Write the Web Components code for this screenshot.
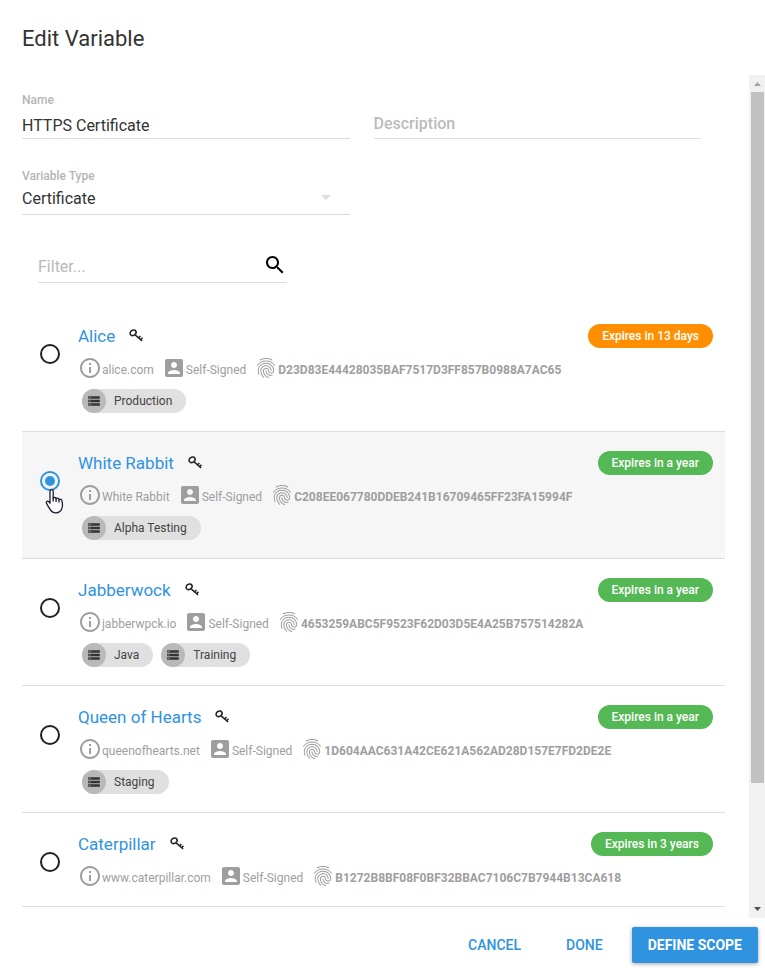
<!DOCTYPE html>
<html lang="en">
<head>
<meta charset="utf-8">
<title>Edit Variable</title>
<style>
  body { margin: 0; font-family: Roboto, "Liberation Sans", sans-serif; background: #fff; color: #333; }
</style>
</head>
<body>
<variable-dialog>
  <text-field slot="fields" label="Name" value="HTTPS Certificate"></text-field>
  <text-field slot="fields" placeholder="Description"></text-field>
  <select-field slot="fields" label="Variable Type" value="Certificate"></select-field>
  <filter-field slot="filter"></filter-field>
  <certificate-row name="Alice" subject="alice.com" thumbprint="D23D83E44428035BAF7517D3FF857B0988A7AC65" expires="Expires in 13 days" soon tags="Production"></certificate-row>
  <certificate-row selected name="White Rabbit" subject="White Rabbit" thumbprint="C208EE067780DDEB241B16709465FF23FA15994F" expires="Expires in a year" tags="Alpha Testing"></certificate-row>
  <certificate-row name="Jabberwock" subject="jabberwpck.io" thumbprint="4653259ABC5F9523F62D03D5E4A25B757514282A" expires="Expires in a year" tags="Java,Training"></certificate-row>
  <certificate-row name="Queen of Hearts" subject="queenofhearts.net" thumbprint="1D604AAC631A42CE621A562AD28D157E7FD2DE2E" expires="Expires in a year" tags="Staging"></certificate-row>
  <certificate-row name="Caterpillar" subject="www.caterpillar.com" thumbprint="B1272B8BF08F0BF32BBAC7106C7B7944B13CA618" expires="Expires in 3 years" tags=""></certificate-row>
  <action-button slot="actions">CANCEL</action-button>
  <action-button slot="actions">DONE</action-button>
  <action-button slot="actions" primary>DEFINE SCOPE</action-button>
</variable-dialog>

<script>
const ICONS = {
  info: '<path d="M11 7h2v2h-2zm0 4h2v6h-2zm1-9C6.48 2 2 6.48 2 12s4.48 10 10 10 10-4.48 10-10S17.52 2 12 2zm0 18c-4.41 0-8-3.59-8-8s3.59-8 8-8 8 3.59 8 8-3.59 8-8 8z"/>',
  account: '<path d="M3 5v14c0 1.1.89 2 2 2h14c1.1 0 2-.9 2-2V5c0-1.100-.9-2-2-2H5c-1.110 0-2 .9-2 2zm12 4c0 1.660-1.340 3-3 3s-3-1.340-3-3 1.340-3 3-3 3 1.340 3 3zm-9 8c0-2 4-3.100 6-3.100s6 1.100 6 3.100v1H6v-1z"/>',
  fingerprint: '<path d="M17.81 4.47c-.08 0-.16-.02-.23-.06C15.66 3.42 14 3 12.01 3c-1.98 0-3.86.47-5.57 1.41-.24.13-.54.04-.68-.2-.13-.24-.04-.55.2-.68C7.82 2.52 9.86 2 12.01 2c2.13 0 3.99.47 6.03 1.52.25.13.34.43.21.67-.09.18-.26.28-.44.28zM3.5 9.72c-.1 0-.2-.03-.29-.09-.23-.16-.28-.47-.12-.7.99-1.4 2.25-2.5 3.75-3.27C9.98 4.04 14 4.03 17.15 5.65c1.5.77 2.76 1.86 3.75 3.25.16.22.11.54-.12.7-.23.16-.54.11-.7-.12-.9-1.26-2.04-2.25-3.39-2.94-2.87-1.47-6.54-1.47-9.4.01-1.36.7-2.5 1.7-3.4 2.96-.08.14-.23.21-.39.21zm6.25 12.07c-.13 0-.26-.05-.35-.15-.87-.87-1.34-1.43-2.01-2.64-.69-1.23-1.05-2.73-1.05-4.34 0-2.97 2.54-5.39 5.66-5.39s5.66 2.42 5.66 5.39c0 .28-.22.5-.5.5s-.5-.22-.5-.5c0-2.42-2.09-4.39-4.66-4.39-2.57 0-4.66 1.97-4.66 4.39 0 1.44.32 2.77.93 3.85.64 1.15 1.08 1.64 1.85 2.42.19.2.19.51 0 .71-.11.1-.24.15-.37.15zm7.17-1.85c-1.19 0-2.24-.3-3.1-.89-1.49-1.01-2.38-2.65-2.38-4.39 0-.28.22-.5.5-.5s.5.22.5.5c0 1.41.72 2.74 1.94 3.56.71.48 1.54.71 2.54.71.24 0 .64-.03 1.04-.1.27-.05.53.13.58.41.05.27-.13.53-.41.58-.57.11-1.07.12-1.21.12zM14.91 22c-.04 0-.09-.01-.13-.02-1.59-.44-2.63-1.03-3.72-2.1-1.4-1.39-2.17-3.24-2.17-5.22 0-1.62 1.38-2.94 3.08-2.94 1.7 0 3.08 1.32 3.08 2.94 0 1.07.93 1.94 2.08 1.94s2.08-.87 2.08-1.94c0-3.77-3.25-6.83-7.25-6.83-2.84 0-5.44 1.58-6.61 4.03-.39.81-.59 1.76-.59 2.8 0 .78.07 2.01.67 3.61.1.26-.03.55-.29.64-.26.1-.55-.04-.64-.29-.49-1.31-.73-2.61-.73-3.96 0-1.2.23-2.29.68-3.24 1.33-2.79 4.28-4.6 7.51-4.6 4.55 0 8.25 3.51 8.25 7.83 0 1.62-1.38 2.94-3.08 2.94s-3.08-1.32-3.08-2.94c0-1.07-.93-1.94-2.08-1.94s-2.08.87-2.08 1.94c0 1.71.66 3.31 1.87 4.51.95.94 1.86 1.46 3.27 1.85.27.07.42.35.35.61-.05.23-.26.38-.47.38z"/>',
  storage: '<path d="M2 20h20v-4H2v4zm2-3h2v2H4v-2zM2 4v4h20V4H2zm4 3H4V5h2v2zm-4 7h20v-4H2v4zm2-3h2v2H4v-2z"/>',
  search: '<path d="M15.500 14h-.79l-.28-.27C15.410 12.590 16 11.110 16 9.500 16 5.910 13.090 3 9.500 3S3 5.910 3 9.500 5.910 16 9.500 16c1.610 0 3.090-.59 4.230-1.570l.27.28v.79l5 4.990L20.490 19l-4.990-5zm-6 0C7.010 14 5 11.990 5 9.500S7.010 5 9.500 5 14 7.010 14 9.500 11.990 14 9.500 14z"/>',
  key: '<g fill="none" stroke="currentColor" stroke-width="2.600"><ellipse cx="7" cy="6.500" rx="5.500" ry="4.400" transform="rotate(-35 7 6.500)"/><path d="M10.500 10l12 10.500M16.500 15.500l3-3.500M20 18.500l3-3.500"/></g>',
  chevron: '<path d="M7 10l5 5 5-5z"/>'
};

class AppIcon extends HTMLElement {
  connectedCallback() {
    const root = this.attachShadow({ mode: 'open' });
    root.innerHTML = `<style>:host{display:block;flex:none;width:24px;height:24px}svg{display:block;width:100%;height:100%;fill:currentColor}</style>
      <svg viewBox="0 0 24 24" aria-hidden="true">${ICONS[this.getAttribute('name')]}</svg>`;
  }
}
customElements.define('app-icon', AppIcon);

class TextField extends HTMLElement {
  connectedCallback() {
    const label = this.getAttribute('label');
    const hint = this.getAttribute('placeholder') || '';
    this.attachShadow({ mode: 'open' }).innerHTML = `<style>
      :host{display:flex;flex-direction:column;justify-content:flex-end;height:46px;border-bottom:1px solid #ddd}
      label{font-size:12px;font-weight:500;line-height:16px;color:#b5b5b5}
      input{font:inherit;font-size:16px;line-height:20px;height:30px;box-sizing:border-box;padding:6px 0 2px;margin:0;border:0;outline:0;width:100%;color:#333;background:none}
      input::placeholder{color:#bbb;opacity:1}
      .bare{padding:2px 0;font-weight:500}
      </style>${label ? `<label for="f">${label}</label>` : ''}
      <input id="f" class="${label ? '' : 'bare'}" type="text" value="${this.getAttribute('value') || ''}" placeholder="${hint}" aria-label="${label || hint}">`;
  }
}
customElements.define('text-field', TextField);

class SelectField extends HTMLElement {
  connectedCallback() {
    this.attachShadow({ mode: 'open' }).innerHTML = `<style>
      :host{display:flex;flex-direction:column;justify-content:flex-end;height:46px;border-bottom:1px solid #ddd}
      label{font-size:12px;font-weight:500;line-height:16px;color:#b5b5b5}
      .box{display:grid;grid-template-columns:1fr 24px 12px;align-items:center;height:30px}
      select{grid-area:1/1/2/4;appearance:none;font:inherit;font-size:16px;line-height:20px;padding:0;margin:0;border:0;outline:0;color:#333;background:none}
      app-icon{grid-area:1/2/2/3;color:#ddd;pointer-events:none;margin-bottom:4px}
      </style><label for="s">${this.getAttribute('label')}</label>
      <div class="box"><select id="s"><option>${this.getAttribute('value')}</option></select><app-icon name="chevron"></app-icon></div>`;
  }
}
customElements.define('select-field', SelectField);

class FilterField extends HTMLElement {
  connectedCallback() {
    this.attachShadow({ mode: 'open' }).innerHTML = `<style>
      :host{display:flex;align-items:center;width:249px;height:34px;border-bottom:1px solid #ddd}
      input{flex:1;min-width:0;font:inherit;font-size:16px;line-height:20px;padding:4px 0 0;border:0;outline:0;background:none}
      input::placeholder{color:#b8b8b8;opacity:1}
      button{border:0;padding:0;background:none;color:#000}
      </style><input type="text" placeholder="Filter..." aria-label="Filter"><button type="button" aria-label="Search"><app-icon name="search"></app-icon></button>`;
  }
}
customElements.define('filter-field', FilterField);

class TagChip extends HTMLElement {
  connectedCallback() {
    this.attachShadow({ mode: 'open' }).innerHTML = `<style>
      :host{display:flex;align-items:center;height:24px;border-radius:12px;background:#e0e0e0;font-size:12px;color:#444;padding-right:14px;gap:8px}
      i{display:grid;place-items:center;width:24px;height:24px;border-radius:50%;background:#b9b9b9;color:#333}
      app-icon{width:14px;height:14px}
      </style><i><app-icon name="storage"></app-icon></i><slot></slot>`;
  }
}
customElements.define('tag-chip', TagChip);

class ExpiryBadge extends HTMLElement {
  connectedCallback() {
    this.attachShadow({ mode: 'open' }).innerHTML = `<style>
      :host{display:block;height:24px;border-radius:12px;background:#54b854;color:#fff;font-size:12px;font-weight:500;line-height:24px;padding:0 14px;white-space:nowrap}
      :host([soon]){background:#ff8f00}
      </style><slot></slot>`;
  }
}
customElements.define('expiry-badge', ExpiryBadge);

class PointerHand extends HTMLElement {
  connectedCallback() {
    this.attachShadow({ mode: 'open' }).innerHTML = `<style>:host{display:block;pointer-events:none}svg{display:block}</style>
      <svg width="20" height="26" viewBox="0 0 20 26" aria-hidden="true"><path d="M5 2.500c0-2.400 3.200-2.400 3.200 0v6.700c.6-1.200 2.700-.9 2.900.6.700-1.100 2.700-.7 2.900.9.800-.9 2.900-.4 3 1.200.6 2.800.9 5.600-.4 8.100-.9 2.300-3 3.700-5.500 3.800-2.300.1-4.300-.8-5.500-2.700-1-1.700-2.200-3.500-3.300-5.300-1.100-1.800-1.400-3.100-.2-3.500 1.100-.4 2 .5 2.900 1.900z" fill="#fff" stroke="#1c1b2e" stroke-width="1.300" stroke-linejoin="round"/><path d="M8.200 8.500v4M11.100 9.500v3.500M14 10.500v3" fill="none" stroke="#1c1b2e" stroke-width="1.300"/></svg>`;
  }
}
customElements.define('pointer-hand', PointerHand);

class CertificateRow extends HTMLElement {
  connectedCallback() {
    const a = n => this.getAttribute(n);
    const on = this.hasAttribute('selected');
    const tags = a('tags') ? a('tags').split(',') : [];
    this.attachShadow({ mode: 'open' }).innerHTML = `<style>
      :host{display:grid;grid-template-columns:20px minmax(0,1fr);column-gap:18px;padding:19px 12px 18px 18px;border-bottom:1px solid #ddd}
      :host([selected]){background:#f6f6f6}
      .pick{position:relative;padding-top:20px}
      input{appearance:none;display:grid;place-items:center;width:20px;height:20px;margin:0;border:2px solid #212121;border-radius:50%;outline:0}
      input:checked{border-color:#2f93e0}
      input:checked::before{content:"";width:10px;height:10px;border-radius:50%;background:#2f93e0}
      pointer-hand{position:absolute;left:5px;top:38px}
      .head{display:flex;align-items:center;height:24px}
      a{font-size:17px;line-height:24px;color:#2f93e0;text-decoration:none}
      .key{width:14px;height:14px;margin-left:14px;color:#222}
      expiry-badge{margin-left:auto}
      .meta{display:flex;align-items:center;height:24px;margin-top:8px;color:#9e9e9e;font-size:12px;white-space:nowrap}
      .meta span{margin-right:8px;padding-top:3px}
      .meta b{padding-top:3px;font-weight:700}
      .tags{display:flex;gap:8px;margin:9px 0 0 4px}
      </style>
      <div class="pick"><input id="r" type="radio" name="certificate" aria-label="${a('name')}" ${on ? 'checked' : ''}>${on ? '<pointer-hand></pointer-hand>' : ''}</div>
      <div>
        <div class="head"><a href="#">${a('name')}</a><app-icon class="key" name="key"></app-icon><expiry-badge ${this.hasAttribute('soon') ? 'soon' : ''}>${a('expires')}</expiry-badge></div>
        <div class="meta"><app-icon name="info"></app-icon><span>${a('subject')}</span><app-icon name="account"></app-icon><span>Self-Signed</span><app-icon name="fingerprint"></app-icon><b>${a('thumbprint')}</b></div>
        ${tags.length ? `<div class="tags">${tags.map(t => `<tag-chip>${t}</tag-chip>`).join('')}</div>` : ''}
      </div>`;
  }
}
customElements.define('certificate-row', CertificateRow);

class ActionButton extends HTMLElement {
  connectedCallback() {
    this.attachShadow({ mode: 'open' }).innerHTML = `<style>
      :host{display:block}
      button{display:block;height:36px;padding:0 16px;border:0;border-radius:2px;background:none;color:#2f93e0;font:inherit;font-size:14px;font-weight:500}
      :host([primary]) button{background:#2f93e0;color:#fff;font-weight:700;box-shadow:0 1px 4px rgba(0,0,0,.35)}
      </style><button type="button"><slot></slot></button>`;
  }
}
customElements.define('action-button', ActionButton);

class ScrollRail extends HTMLElement {
  connectedCallback() {
    this.attachShadow({ mode: 'open' }).innerHTML = `<style>
      :host{display:flex;flex-direction:column;width:16px;background:#f1f1f1}
      svg{display:block;flex:none;width:16px;height:17px}
      .track{flex:1;padding:0 1px 0 2px}
      .thumb{height:85.4%;background:#c1c1c1}
      </style><svg viewBox="0 0 16 17"><path d="M5 11h7L8.500 7z" fill="#a3a3a3"/></svg>
      <div class="track"><div class="thumb"></div></div>
      <svg viewBox="0 0 16 17"><path d="M5 6h7L8.500 10z" fill="#505050"/></svg>`;
  }
}
customElements.define('scroll-rail', ScrollRail);

class VariableDialog extends HTMLElement {
  connectedCallback() {
    this.attachShadow({ mode: 'open' }).innerHTML = `<style>
      :host{display:flex;flex-direction:column;height:100vh}
      h1{margin:0;padding:23px 22px 20px;font-size:22px;line-height:32px;font-weight:400;color:#333}
      .body{display:flex;flex:1;min-height:0}
      .content{flex:1;min-width:0;overflow:hidden;padding:17px 24px 0 22px}
      .fields{display:grid;grid-template-columns:1fr 1fr;gap:29px 24px;padding-right:24px}
      .filter{padding:33px 16px 22px}
      footer{display:flex;justify-content:flex-end;align-items:flex-start;gap:13px;height:41px;padding:9px 7px 0}
      </style>
      <h1>Edit Variable</h1>
      <div class="body"><div class="content">
        <div class="fields"><slot name="fields"></slot></div>
        <div class="filter"><slot name="filter"></slot></div>
        <slot></slot>
      </div><scroll-rail aria-hidden="true"></scroll-rail></div>
      <footer><slot name="actions"></slot></footer>`;
  }
}
customElements.define('variable-dialog', VariableDialog);
</script>
</body>
</html>
